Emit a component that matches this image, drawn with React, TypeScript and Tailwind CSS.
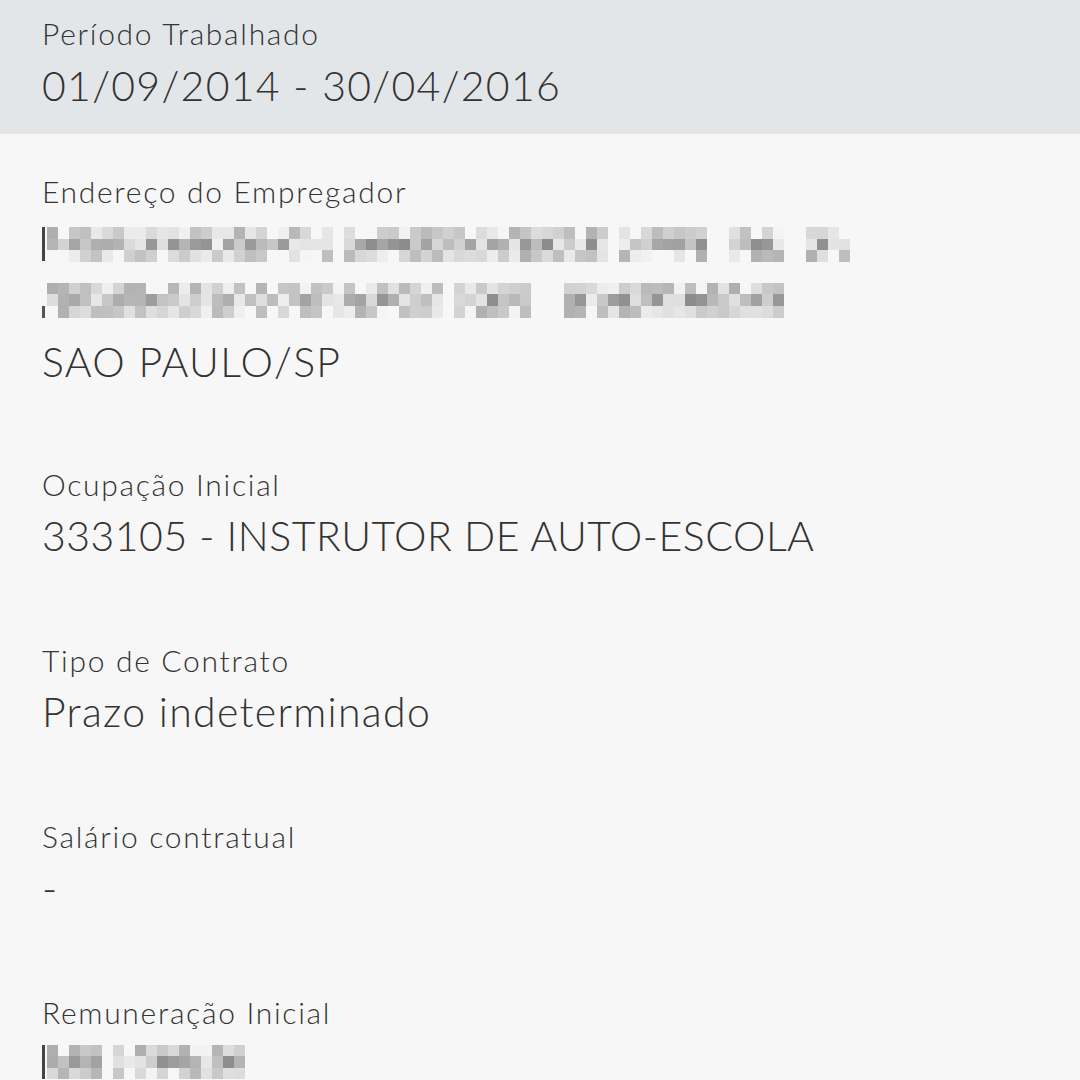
import React from 'react'

// pixelated (censored) text, cells generated from a fixed seed
function rng(seed: number) {
  let s = seed
  return () => {
    s = (s * 16807) % 2147483647
    return (s - 1) / 2147483646
  }
}

function Mosaic({ width, seed, gaps = [], cell = 11, rows = 3 }: { width: number; seed: number; gaps?: [number, number][]; cell?: number; rows?: number }) {
  const rand = rng(seed)
  const cols = Math.floor(width / cell)
  return (
    <div className="flex flex-col">
      {Array.from({ length: rows }).map((_, r) => (
        <div key={r} className="flex">
          {Array.from({ length: cols }).map((_, c) => {
            const x = c * cell
            const inGap = gaps.some(([a, b]) => x >= a && x < b)
            const v = rand()
            let shade = 247
            if (!inGap) {
              const base = r === 1 ? 140 : 175
              shade = Math.min(247, Math.round(base + v * (r === 1 ? 100 : 80)))
            }
            return (
              <div
                key={c}
                style={{ width: cell, height: cell + 0.6, background: `rgb(${shade},${shade},${shade})` }}
              />
            )
          })}
        </div>
      ))}
    </div>
  )
}

function Campo({ rotulo, children, className = '' }: { rotulo: string; children: React.ReactNode; className?: string }) {
  return (
    <div className={`flex flex-col ${className}`}>
      <div className="text-[30px] leading-[38px] tracking-[1.7px] text-[#333]">{rotulo}</div>
      {children}
    </div>
  )
}

export default function App() {
  return (
    <div className="w-[1080px] h-[1080px] overflow-hidden bg-[#f7f7f7] text-[#333] font-light" style={{ fontFamily: 'Lato, "Open Sans", sans-serif' }}>
      {/* cabeçalho */}
      <div className="bg-[#e2e6e9] px-[42px] pt-[14px] pb-[22px]">
        <div className="text-[30px] leading-[38px] tracking-[1.7px]">Período Trabalhado</div>
        <div className="mt-[8px] text-[41px] leading-[52px] tracking-[1.3px]">01/09/2014 - 30/04/2016</div>
      </div>

      <div className="px-[42px] pt-[38px] flex flex-col gap-[79px]">
        <Campo rotulo="Endereço do Empregador" className="mb-[-2px]">
          <div className="mt-[17px] flex items-center">
            <div className="w-[3px] h-[34px] bg-[#444] mr-[2px]" />
            <Mosaic width={811} seed={7} gaps={[[286, 297], [561, 572], [660, 682], [737, 759]]} />
          </div>
          <div className="mt-[21px] flex items-end">
            <div className="w-[3px] h-[12px] bg-[#555] mr-[2px]" />
            <Mosaic width={745} seed={31} gaps={[[396, 407], [484, 517]]} />
          </div>
          <div className="mt-[18px] text-[41px] leading-[52px] tracking-[1.3px]">SAO PAULO/SP</div>
        </Campo>

        <Campo rotulo="Ocupação Inicial">
          <div className="mt-[7px] text-[41px] leading-[52px] tracking-[0.5px]">333105 - INSTRUTOR DE AUTO-ESCOLA</div>
        </Campo>

        <Campo rotulo="Tipo de Contrato">
          <div className="mt-[7px] text-[41px] leading-[52px] tracking-[1.3px]">Prazo indeterminado</div>
        </Campo>

        <Campo rotulo="Salário contratual">
          <div className="mt-[7px] text-[41px] leading-[52px]">-</div>
        </Campo>

        <Campo rotulo="Remuneração Inicial">
          <div className="mt-[14px] flex items-start">
            <div className="w-[3px] h-[34px] bg-[#444] mr-[2px]" />
            <Mosaic width={198} seed={53} gaps={[[55, 66]]} />
          </div>
        </Campo>
      </div>
    </div>
  )
}
